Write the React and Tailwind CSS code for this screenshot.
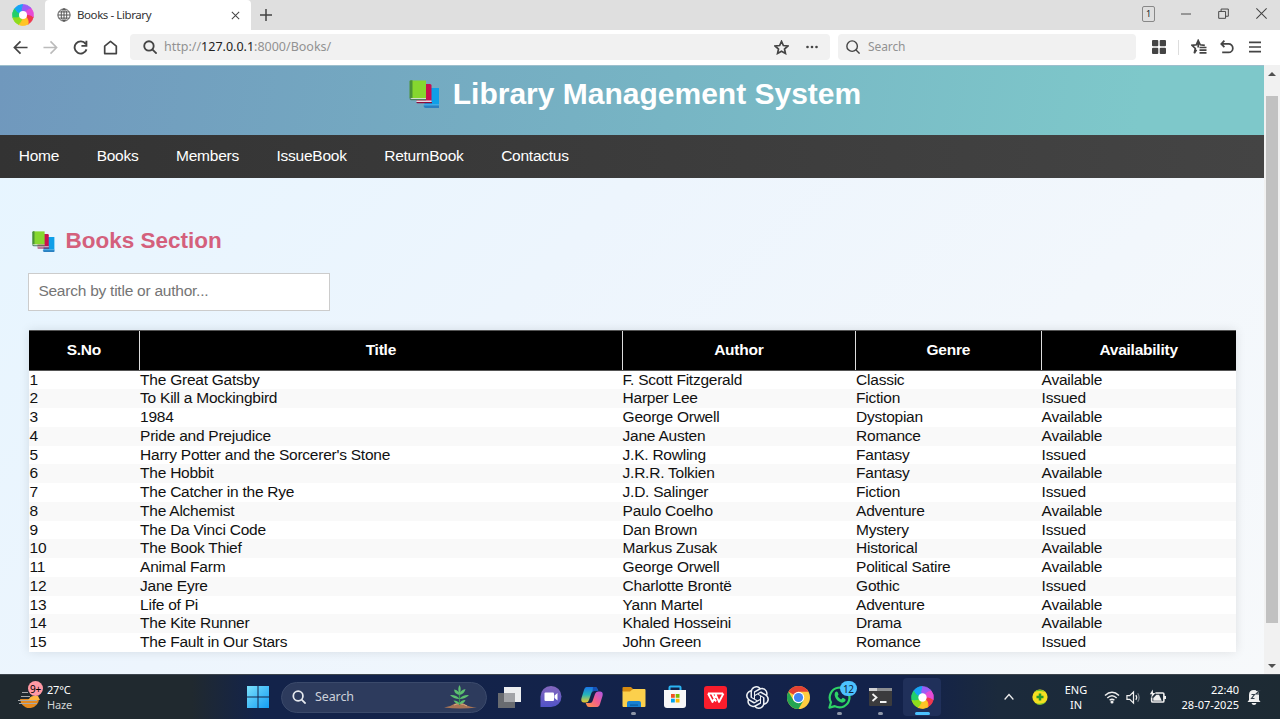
import React from "react";

const books = [
  ["The Great Gatsby", "F. Scott Fitzgerald", "Classic", "Available"],
  ["To Kill a Mockingbird", "Harper Lee", "Fiction", "Issued"],
  ["1984", "George Orwell", "Dystopian", "Available"],
  ["Pride and Prejudice", "Jane Austen", "Romance", "Available"],
  ["Harry Potter and the Sorcerer's Stone", "J.K. Rowling", "Fantasy", "Issued"],
  ["The Hobbit", "J.R.R. Tolkien", "Fantasy", "Available"],
  ["The Catcher in the Rye", "J.D. Salinger", "Fiction", "Issued"],
  ["The Alchemist", "Paulo Coelho", "Adventure", "Available"],
  ["The Da Vinci Code", "Dan Brown", "Mystery", "Issued"],
  ["The Book Thief", "Markus Zusak", "Historical", "Available"],
  ["Animal Farm", "George Orwell", "Political Satire", "Available"],
  ["Jane Eyre", "Charlotte Brontë", "Gothic", "Issued"],
  ["Life of Pi", "Yann Martel", "Adventure", "Available"],
  ["The Kite Runner", "Khaled Hosseini", "Drama", "Available"],
  ["The Fault in Our Stars", "John Green", "Romance", "Issued"],
];

const columns = "grid grid-cols-[110.5px_482.5px_233.5px_185.5px_195px]";

function BooksIcon({ className }) {
  return (
    <svg viewBox="0 0 30 28" className={className}>
      <path d="M15 8h14.5v18.5H15z" fill="#0f9fe8" />
      <path d="M15 24.5h14.5v1H15z" fill="#6fb8e6" />
      <path d="M14 25.6h15.5V28H16q-2 0-2-2.4z" fill="#2b7fc0" />
      <path d="M7 4h13.5q1.5 0 1.5 1.5V21H7z" fill="#c8104f" />
      <path d="M7 20.5h15v1.4H7z" fill="#f4e3e8" />
      <path d="M7 22h15.5v1.3H8q-1.500 0-1-1.300z" fill="#8f0b3a" />
      <path d="M1 .5h15.5V18H1z" fill="#86d72f" />
      <path d="M0 1.5Q0 .3 1.5.3H3V18H0z" fill="#4b9138" />
      <path d="M1 18h15.5v1H1z" fill="#d3dfcd" />
      <path d="M0 17.8q0 2.500 1.800 2.500h14.700V19H2z" fill="#4c7c61" />
    </svg>
  );
}

function Swirl({ size }) {
  const blades = ["#f0384f", "#e64bd6", "#9a5cf5", "#18a4f5", "#22cf6a", "#8fdc1c", "#ffc425"];
  return (
    <svg width={size} height={size} viewBox="-12 -12 24 24" className="overflow-visible">
      <defs>
        <filter id="bladeBlend" x="-20%" y="-20%" width="140%" height="140%">
          <feGaussianBlur stdDeviation="0.75" />
        </filter>
      </defs>
      <g filter="url(#bladeBlend)">
        {blades.map((c, i) => (
          <path key={c} d="M0 0Q6-4 10.500 0A10.500 10.500 0 0 1 6.500 8.200Q6 3 0 0z" fill={c} stroke={c} strokeWidth="0.800" transform={`rotate(${-i * 51.43 + 10})`} />
        ))}
        <circle r="4" fill="#fff" />
      </g>
    </svg>
  );
}

function Icon({ size = 16, w = 2, color = "#444", box = 16, className = "", children }) {
  return (
    <svg width={size} height={size} viewBox={`0 0 ${box} ${box}`} fill="none" stroke={color} strokeWidth={w} className={`shrink-0 ${className}`}>
      {children}
    </svg>
  );
}

function TabBar() {
  return (
    <div className="flex h-[30px] bg-[#dfdfdf]">
      <div className="flex w-[45px] items-center justify-center pb-px"><Swirl size={24} /></div>
      <div className="flex w-[206px] items-center rounded-t bg-white pl-3">
        <Icon size={14} w={1}>
          <circle cx="8" cy="8" r="7" /><ellipse cx="8" cy="8" rx="3.2" ry="7" /><path d="M8 1v14M1 8h14M2 4.5h12M2 11.5h12" />
        </Icon>
        <span className="ml-[6px] w-[154px] text-[11.500px] leading-4 tracking-[-0.420px] text-[#333]">Books - Library</span>
        <Icon size={9} w={1.8}><path d="M1.5 1.5l13 13M14.5 1.5l-13 13" /></Icon>
      </div>
      <div className="flex w-[30px] items-center justify-center">
        <Icon size={12} w={2}><path d="M8 0v16M0 8h16" /></Icon>
      </div>
      <div className="ml-auto flex items-center pb-[3px] pr-[13px]">
        <span className="mr-[26px] flex h-4 w-[13px] items-center justify-center rounded-[2px] border border-[#888] text-[9px] leading-none text-[#222]">1</span>
        <Icon size={10} w={1.5}><path d="M0 8h16" /></Icon>
        <Icon size={11} w={1.4} className="ml-[27px]"><path d="M1 5h10v10H1zM4.500 5V1.500H15V12h-4" /></Icon>
        <Icon size={11} w={1.5} className="ml-[27px]"><path d="M0.500.5l15 15M15.500.5l-15 15" /></Icon>
      </div>
    </div>
  );
}

const starPath = "M8 1.500l2 4.400 4.800.5-3.600 3.200 1 4.700L8 11.900l-4.200 2.400 1-4.700L1.200 6.400 6 5.900z";

function ToolBar() {
  return (
    <div className="flex h-[35px] items-center bg-white pb-px pl-[13px] pr-[18px]">
      <Icon size={15} w={1.8}><path d="M15.500 8H1.500M8 1.500L1.500 8 8 14.500" /></Icon>
      <Icon size={15} w={1.7} color="#bbb" className="ml-[15px]"><path d="M.5 8h14M8 1.500L14.500 8 8 14.500" /></Icon>
      <Icon size={15} w={2} className="ml-[15px]"><path d="M13.500 4.200A6.500 6.500 0 1 0 14.400 10M14.300.8v5.400H9" /></Icon>
      <Icon size={15} w={1.8} className="ml-[15px]"><path d="M1.800 14.500V6.500L8 1.500l6.200 5v8z" strokeLinejoin="round" /></Icon>
      <div className="ml-3 flex h-[26px] w-[700px] items-center rounded bg-[#f1f1f1] pl-[13px] pr-3">
        <Icon size={14} w={2.1}><circle cx="6.800" cy="6.800" r="5.400" /><path d="M10.600 10.600l5 5" /></Icon>
        <span className="ml-[7px] text-[12.500px] leading-4 text-[#929292]">http://<span className="text-[#222]">127.0.0.1</span>:8000/Books/</span>
        <Icon size={15} w={1.8} className="ml-auto"><path d={starPath} /></Icon>
        <svg width="12" height="4" viewBox="0 0 12 4" fill="#444" className="ml-[17px]"><circle cx="1.500" cy="2" r="1.300" /><circle cx="6" cy="2" r="1.300" /><circle cx="10.500" cy="2" r="1.300" /></svg>
      </div>
      <div className="ml-2 flex h-[26px] w-[298px] items-center rounded bg-[#f1f1f1] pl-2">
        <Icon size={14} w={1.6}><circle cx="7" cy="7" r="6" /><path d="M11.200 11.200l4.300 4.300" /></Icon>
        <span className="ml-[8px] text-[12px] leading-4 tracking-[-0.100px] text-[#929292]">Search</span>
      </div>
      <svg width="14" height="14" viewBox="0 0 14 14" fill="#444" className="ml-4"><rect width="6.300" height="6.300" rx="1" /><rect x="7.700" width="6.300" height="6.300" rx="1" /><rect y="7.700" width="6.300" height="6.300" rx="1" /><rect x="7.700" y="7.700" width="6.300" height="6.300" rx="1" /></svg>
      <div className="ml-3 h-[15px] w-px bg-[#ddd]" />
      <Icon size={16} w={1.7} className="ml-[12px]"><path d="M5.500 10.800l-2.200 3.400 1-4.700L1 6.300l4.300-.5L7.200 1.500l2 4.300 4.600.5M7.200 1.500v7M8.500 8.500h7M8.500 11.200h7M8.500 13.900h7" /></Icon>
      <Icon size={14} w={2} className="ml-[13px]"><path d="M5 .8L1.500 4.500 5 8.200M1.500 4.500h8.300a4.700 4.700 0 0 1 0 9.700H2.500" /></Icon>
      <Icon size={12} w={2.200} className="ml-[15px]"><path d="M0 1.800h16M0 8h16M0 14.200h16" /></Icon>
    </div>
  );
}

function Page() {
  return (
    <div className="h-full w-[1264px] overflow-hidden bg-[linear-gradient(135deg,#e6f5ff_0%,#edf5fd_40%,#f7f9fb_100%)] font-['Liberation_Sans',Arial,sans-serif] text-[15.500px] tracking-[-0.240px]">
      <header className="flex h-[70px] justify-center border-t border-[#9dbfcd] bg-[linear-gradient(100deg,#7098bd_0%,#77b5c4_53%,#7ec8ca_90%)] pl-[6px] pt-[10px]">
        <BooksIcon className="mr-[13px] mt-[4px] h-[28px] w-[31px]" />
        <h1 className="text-[30px] font-bold leading-9 tracking-normal text-white">Library Management System</h1>
      </header>
      <nav className="flex h-[43px] items-center gap-[37.500px] bg-[linear-gradient(90deg,#333,#444)] pl-[18.750px] pb-px text-white">
        {["Home", "Books", "Members", "IssueBook", "ReturnBook", "Contactus"].map((n) => <a key={n}>{n}</a>)}
      </nav>
      <main className="pl-[28px] pt-[48px]">
        <div className="flex h-[30px] items-center pl-1">
          <BooksIcon className="mr-[10.500px] h-[21px] w-[23px]" />
          <h2 className="text-[22.500px] font-bold leading-[30px] tracking-normal text-[#d4607c]">Books Section</h2>
        </div>
        <input placeholder="Search by title or author..." className="mt-[17px] block h-[38px] w-[302px] border border-[#ccc] bg-white px-[9.400px] pb-[2px] placeholder:text-[#757575]" />
        <div role="table" className="ml-[0.600px] mt-[19px] w-[1207px] bg-white text-[#111] shadow-[0_0_10px_rgba(0,0,0,0.1)]">
          <div role="row" className={`${columns} h-[40.500px] border-y border-[#555] bg-black text-center font-bold leading-[38px] text-white`}>
            {["S.No", "Title", "Author", "Genre", "Availability"].map((h, i) => (
              <div role="columnheader" key={h} className={i ? "border-l border-[#ddd]" : ""}>{h}</div>
            ))}
          </div>
          {books.map((b, i) => (
            <div role="row" key={b[0]} className={`${columns} h-[18.750px] leading-[18.750px] ${i % 2 ? "bg-[#f9f9f9]" : "bg-white"}`}>
              {[i + 1, ...b].map((c, j) => <div role="cell" key={j} className="pl-px">{c}</div>)}
            </div>
          ))}
        </div>
      </main>
    </div>
  );
}

function ScrollBar() {
  return (
    <div className="flex w-4 flex-col items-center bg-[#f1f1f1]">
      <svg width="8" height="4" viewBox="0 0 8 4" className="mt-[7px] shrink-0"><path d="M0 4l4-4 4 4z" fill="#505050" /></svg>
      <div className="mt-5 h-[527px] w-3 bg-[#c1c1c1]" />
      <svg width="8" height="4" viewBox="0 0 8 4" className="mt-[41px] shrink-0"><path d="M0 0l4 4 4-4z" fill="#505050" /></svg>
    </div>
  );
}

function Slot({ dot, children }) {
  return (
    <div className="relative flex h-full w-[41.200px] shrink-0 items-center justify-center">
      {children}
      {dot && <span className="absolute bottom-[4px] h-[3px] w-[5px] rounded-full bg-[#8d96a8]" />}
    </div>
  );
}

function TaskBar() {
  return (
    <footer className="flex h-[45px] items-center border-t border-[#3d454d] bg-[linear-gradient(90deg,#20292f_0%,#20292f_15%,#13234a_20%,#13224a_72%,#1b2a3c_78%,#1d2a33_100%)] text-white">
      <div className="flex w-[237.400px] items-center pl-[17px]">
        <div className="relative mr-[4px] h-[32px] w-[26px]">
          <svg width="26" height="32" viewBox="0 0 26 32">
            <path d="M3 18h19a9.500 9 0 0 1-18 4z" fill="#e58a1f" />
            <path d="M12 18q2-4 9-3l2 4H11z" fill="#ffb640" />
            <path d="M5 11.500h6M4 15.500h9M1 19.500h19M2 22.500h18" stroke="#a6a8aa" strokeWidth="1.200" />
          </svg>
          <span className="absolute right-0 top-0 flex h-[15px] w-[15px] items-center justify-center rounded-full bg-[#ff99a4] text-[10px] leading-none tracking-tight text-black">9+</span>
        </div>
        <div className="text-[11px] leading-[15px] tracking-[-0.200px]"><div>27°C</div><div className="text-[#d1d4d6]">Haze</div></div>
      </div>
      <Slot>
        <svg width="22" height="22" viewBox="0 0 22 22">
          <defs><linearGradient id="win" x1="0" y1="0" x2="1" y2="1"><stop stopColor="#7be0fb" /><stop offset="1" stopColor="#139df5" /></linearGradient></defs>
          <path d="M0 0h10.500v10.500H0zM11.500 0H22v10.500H11.500zM0 11.500h10.500V22H0zM11.500 11.500H22V22H11.500z" fill="url(#win)" />
        </svg>
      </Slot>
      <div className="ml-[2.400px] mr-[2.400px] flex h-[31px] w-[206px] items-center rounded-full border border-[#3b4a6b] bg-[#2d3b5d] pl-[10px] pr-[9px]">
        <Icon size={14} w={2} color="#e6e9ee"><circle cx="7" cy="6.800" r="5.500" /><path d="M11 11l4.500 4.500" /></Icon>
        <span className="ml-[9px] text-[12.500px] leading-4 tracking-[-0.100px] text-[#ccd1da]">Search</span>
        <svg width="33" height="24" viewBox="0 0 33 24" className="ml-auto">
          <path d="M0 22.500q6-.5 10-3.500 7-3 12 1 4 2 11 2.500-17 2-33 0z" fill="#a87455" />
          <path d="M10 20q6-3 13 1" fill="none" stroke="#d8a781" />
          <path d="M15.500 20V7" stroke="#399653" strokeWidth="1.300" />
          <path d="M15.500 9q-2.500-5 0-9 2.500 4 0 9zM15.500 10q-5-1-5.500-5.500 5 .5 5.500 5.500zM15.500 10q.5-5 6-6-1 5-6 6zM15.500 14q-6 0-9.500-4 6.500-.5 9.500 4zM15.500 14q3-4.500 9.500-4-3.500 4-9.500 4zM15.500 19q-4 0-6-3.500 5 0 6 3.500zM15.500 19q1-4 6-4-1.500 4-6 4z" fill="#5cc070" />
        </svg>
      </div>
      <Slot>
        <svg width="23" height="21" viewBox="0 0 23 21"><path d="M6 0h17v15H6z" fill="#eceef0" /><path d="M0 6h17v15H0z" fill="#686b70" /><path d="M6 6h11v9H6z" fill="#a2a4a8" /></svg>
      </Slot>
      <Slot>
        <svg width="22" height="22" viewBox="0 0 22 22">
          <defs><linearGradient id="chat" x1="0" y1="0" x2="0" y2="1"><stop stopColor="#8567bd" /><stop offset="1" stopColor="#5053c7" /></linearGradient></defs>
          <path d="M.5 21V10.500A10.500 10.500 0 1 1 11 21z" fill="url(#chat)" /><rect x="4.500" y="6.500" width="9.500" height="8.500" rx="1" fill="#fff" /><path d="M14.500 9.500l3-2.500v7.500l-3-2.500z" fill="#fff" />
        </svg>
      </Slot>
      <Slot>
        <svg width="22" height="22" viewBox="0 0 22 22">
          <defs>
            <linearGradient id="copA" x1="0" y1="0" x2="0" y2="1"><stop stopColor="#1a75e8" /><stop offset=".5" stopColor="#25b5ba" /><stop offset="1" stopColor="#f1cb26" /></linearGradient>
            <linearGradient id="copB" x1="1" y1="0" x2="0" y2="1"><stop stopColor="#ad56e9" /><stop offset=".5" stopColor="#f45e8c" /><stop offset="1" stopColor="#ff9b3f" /></linearGradient>
          </defs>
          <path d="M5.500 1H14q2 0 2.500 2l.8 2H13q-2 0-2.600 2L8 14q-.8 2.500-3 2.500H3q-3.500 0-2.500-4.500L3 4q.7-3 2.500-3z" fill="url(#copA)" />
          <path d="M16.500 21H8q-2 0-2.500-2l-.8-2H9q2 0 2.600-2L14 8q.8-2.500 3-2.500h2q3.500 0 2.500 4.500L19 18q-.7 3-2.500 3z" fill="url(#copB)" />
          <path d="M12 1h2q2 0 2.500 2l.8 2H13q-1 0-1.500.6z" fill="#1551b6" />
        </svg>
      </Slot>
      <Slot dot>
        <svg width="24" height="22" viewBox="0 0 24 22"><path d="M.5 2q0-1 1-1H9l2 2-1 3H.5z" fill="#d78b10" /><path d="M.5 5.500H8L11 3h11.500q1 0 1 1v16q0 1-1 1h-21q-1 0-1-1z" fill="#fcd04c" /><path d="M5 21v-4q0-2 2-2h10q2 0 2 2v4z" fill="#1780d2" /><path d="M8 18.500h8v1.200H8z" fill="#0a5b9f" /></svg>
      </Slot>
      <Slot>
        <svg width="22" height="24" viewBox="0 0 22 24"><path d="M5.500 7V2.500q0-1 1-1h9q1 0 1 1V7" fill="none" stroke="#2bb4f2" strokeWidth="2" /><path d="M0 5h22v15q0 3-3 3H3q-3 0-3-3z" fill="#f7f7f8" /><path d="M7 9h3.800v3.800H7z" fill="#f25022" /><path d="M11.700 9h3.800v3.800h-3.800z" fill="#7fba00" /><path d="M7 13.700h3.800v3.800H7z" fill="#00a4ef" /><path d="M11.700 13.700h3.800v3.800h-3.800z" fill="#ffb900" /></svg>
      </Slot>
      <Slot>
        <svg width="23" height="23" viewBox="0 0 23 23"><rect width="23" height="23" rx="3" fill="#f91d2c" /><path d="M4 7.500h15M4 7.500L8.500 16 12 9l3 7 4.500-8.500M8 7.500l4 8" fill="none" stroke="#fff" strokeWidth="1.800" strokeLinejoin="round" /></svg>
      </Slot>
      <Slot>
        <svg width="23" height="23" viewBox="0 0 24 24" fill="#edf0f4"><path d="M22.282 9.821a5.985 5.985 0 0 0-.516-4.910 6.046 6.046 0 0 0-6.510-2.900A6.065 6.065 0 0 0 4.981 4.180a5.985 5.985 0 0 0-3.998 2.900 6.046 6.046 0 0 0 .743 7.097 5.980 5.980 0 0 0 .511 4.911 6.051 6.051 0 0 0 6.515 2.900A5.985 5.985 0 0 0 13.260 24a6.056 6.056 0 0 0 5.772-4.206 5.990 5.990 0 0 0 3.997-2.900 6.056 6.056 0 0 0-.747-7.073zM13.260 22.430a4.476 4.476 0 0 1-2.876-1.040l.141-.081 4.779-2.758a.795.795 0 0 0 .392-.681v-6.737l2.020 1.169a.071.071 0 0 1 .038.052v5.583a4.504 4.504 0 0 1-4.494 4.493zM3.600 18.304a4.470 4.470 0 0 1-.535-3.014l.142.085 4.783 2.759a.771.771 0 0 0 .780 0l5.843-3.369v2.333a.080.080 0 0 1-.033.061L9.740 19.950a4.500 4.500 0 0 1-6.140-1.646zM2.341 7.896a4.485 4.485 0 0 1 2.365-1.973V11.600a.766.766 0 0 0 .388.677l5.815 3.354-2.020 1.169a.076.076 0 0 1-.071 0l-4.830-2.787A4.504 4.504 0 0 1 2.341 7.872zm16.596 3.856l-5.833-3.387L15.119 7.200a.076.076 0 0 1 .071 0l4.830 2.791a4.494 4.494 0 0 1-.676 8.105v-5.678a.790.790 0 0 0-.407-.667zm2.011-3.023l-.142-.085-4.773-2.782a.776.776 0 0 0-.786 0L9.409 9.230V6.897a.066.066 0 0 1 .028-.061l4.830-2.787a4.500 4.500 0 0 1 6.680 4.660zM8.307 12.863l-2.020-1.164a.080.080 0 0 1-.038-.057V6.075a4.500 4.500 0 0 1 7.376-3.454l-.142.081L8.704 5.460a.795.795 0 0 0-.393.681zm1.097-2.366l2.602-1.500 2.607 1.500v3l-2.597 1.500-2.607-1.500z" /></svg>
      </Slot>
      <Slot>
        <svg width="23" height="23" viewBox="0 0 24 24"><circle cx="12" cy="12" r="12" fill="#ffcd40" /><path d="M12 12L1.600 6A12 12 0 0 1 22.400 6H12z" fill="#e34133" /><path d="M1.600 6A12 12 0 0 0 12 24l5.200-9H6.800z" fill="#24a552" /><circle cx="12" cy="12" r="6" fill="#fff" /><circle cx="12" cy="12" r="4.800" fill="#4285f4" /></svg>
      </Slot>
      <Slot dot>
        <svg width="23" height="23" viewBox="0 0 24 24"><path d="M1.500 22.500l1.600-5.500a10.300 10.300 0 1 1 4 4z" fill="none" stroke="#2ed366" strokeWidth="2.300" strokeLinejoin="round" /><path d="M7.500 6.500q1.800-1.300 2.600 0l.9 2.200q.1.700-1 1.800 1.200 2.400 3.700 3.500l1.400-1.500q.4-.4 1 0l2.100 1.200q.7 2.600-2.700 3.600C11 18 5 11 7.500 6.500z" fill="#2ed366" /></svg>
        <span className="absolute left-[21px] top-[6px] flex h-[15px] w-[17px] items-center justify-center rounded-full bg-[#4cc2ff] text-[10px] leading-none tracking-tight text-[#10243b]">12</span>
      </Slot>
      <Slot dot>
        <svg width="23" height="18" viewBox="0 0 23 18"><rect width="23" height="18" rx="1" fill="#3b3b3d" /><path d="M0 0h23v3H0z" fill="#8b8d90" /><path d="M0 0h8v3H0z" fill="#d0d1d3" /><path d="M3.500 6l4 3.500-4 3.500M11 14h6.500" fill="none" stroke="#f3f3f3" strokeWidth="1.800" /></svg>
      </Slot>
      <div className="relative ml-[2px] flex h-[38px] w-[38px] shrink-0 items-center justify-center rounded bg-[#20305a]">
        <Swirl size={25} />
        <span className="absolute bottom-[1px] h-[3px] w-[15px] rounded-full bg-[#4cc2ff]" />
      </div>
      <div className="ml-auto flex items-center pr-[19px]">
        <Icon size={10} w={2} color="#eee"><path d="M1 12l7-8 7 8" /></Icon>
        <svg width="16" height="16" viewBox="0 0 16 16" className="ml-[18px]"><circle cx="8" cy="8" r="7.600" fill="#f4df20" /><path d="M2 3a7.600 7.600 0 0 1 11 0Q7 1 2 3zM3 14a7.600 7.600 0 0 0 11-1q-6 3-11 1z" fill="#6abf2c" /><path d="M8 4.500v7M4.500 8h7" stroke="#23962f" strokeWidth="2.500" /></svg>
        <div className="ml-[11px] w-[34px] text-center text-[11px] leading-[15px]"><div>ENG</div><div>IN</div></div>
        <Icon size={16} w={1.500} color="#eee" className="ml-[11px]"><path d="M1 6.500q7-6.500 14 0M3.300 9q4.700-4.500 9.400 0M5.600 11.300q2.400-2.200 4.800 0" /><circle cx="8" cy="13" r=".8" fill="#eee" /></Icon>
        <Icon size={15} w={1.300} color="#eee" className="ml-[6px]"><path d="M1 6h3l4-4v12l-4-4H1zM10.500 5.500q1.800 2.500 0 5" /><path d="M12.500 3.500q3 4.500 0 9" stroke="#78818a" /></Icon>
        <Icon size={17} w={1.500} color="#eee" className="ml-[8px]"><path d="M6 3.800h7q1 0 1 1v6.400q0 1-1 1H3.500q-1 0-1-1V8M15.500 6.500v3" /><path d="M4 11V8.500l3-3h2.500l2.500 5.500z" fill="#eee" stroke="none" /><path d="M3.500.5L.8 5h2L2 8.500 6 3.800H3.800z" fill="#eee" stroke="none" /></Icon>
        <div className="ml-[10px] w-[63px] whitespace-nowrap text-right text-[11px] leading-[15px]"><div>22:40</div><div>28-07-2025</div></div>
        <svg width="14" height="16" viewBox="0 0 14 16" className="ml-2"><path d="M2 11V6Q2 1 7 1t5 5v5l1.500 2H.5z" fill="#f0f0f0" /><path d="M4.500 14h5Q9 16 7 16t-2.500-2z" fill="#f0f0f0" /><path d="M4.500 5.500h3l-3 4h3M9 1.500h3.500L9 5h3.500" fill="none" stroke="#34404b" strokeWidth="1.100" /></svg>
      </div>
    </footer>
  );
}

export default function App() {
  return (
    <div className="flex h-[719px] w-[1280px] flex-col overflow-hidden font-['Noto_Sans','Open_Sans',sans-serif]">
      <TabBar />
      <ToolBar />
      <div className="flex h-[609px]">
        <Page />
        <ScrollBar />
      </div>
      <TaskBar />
    </div>
  );
}
